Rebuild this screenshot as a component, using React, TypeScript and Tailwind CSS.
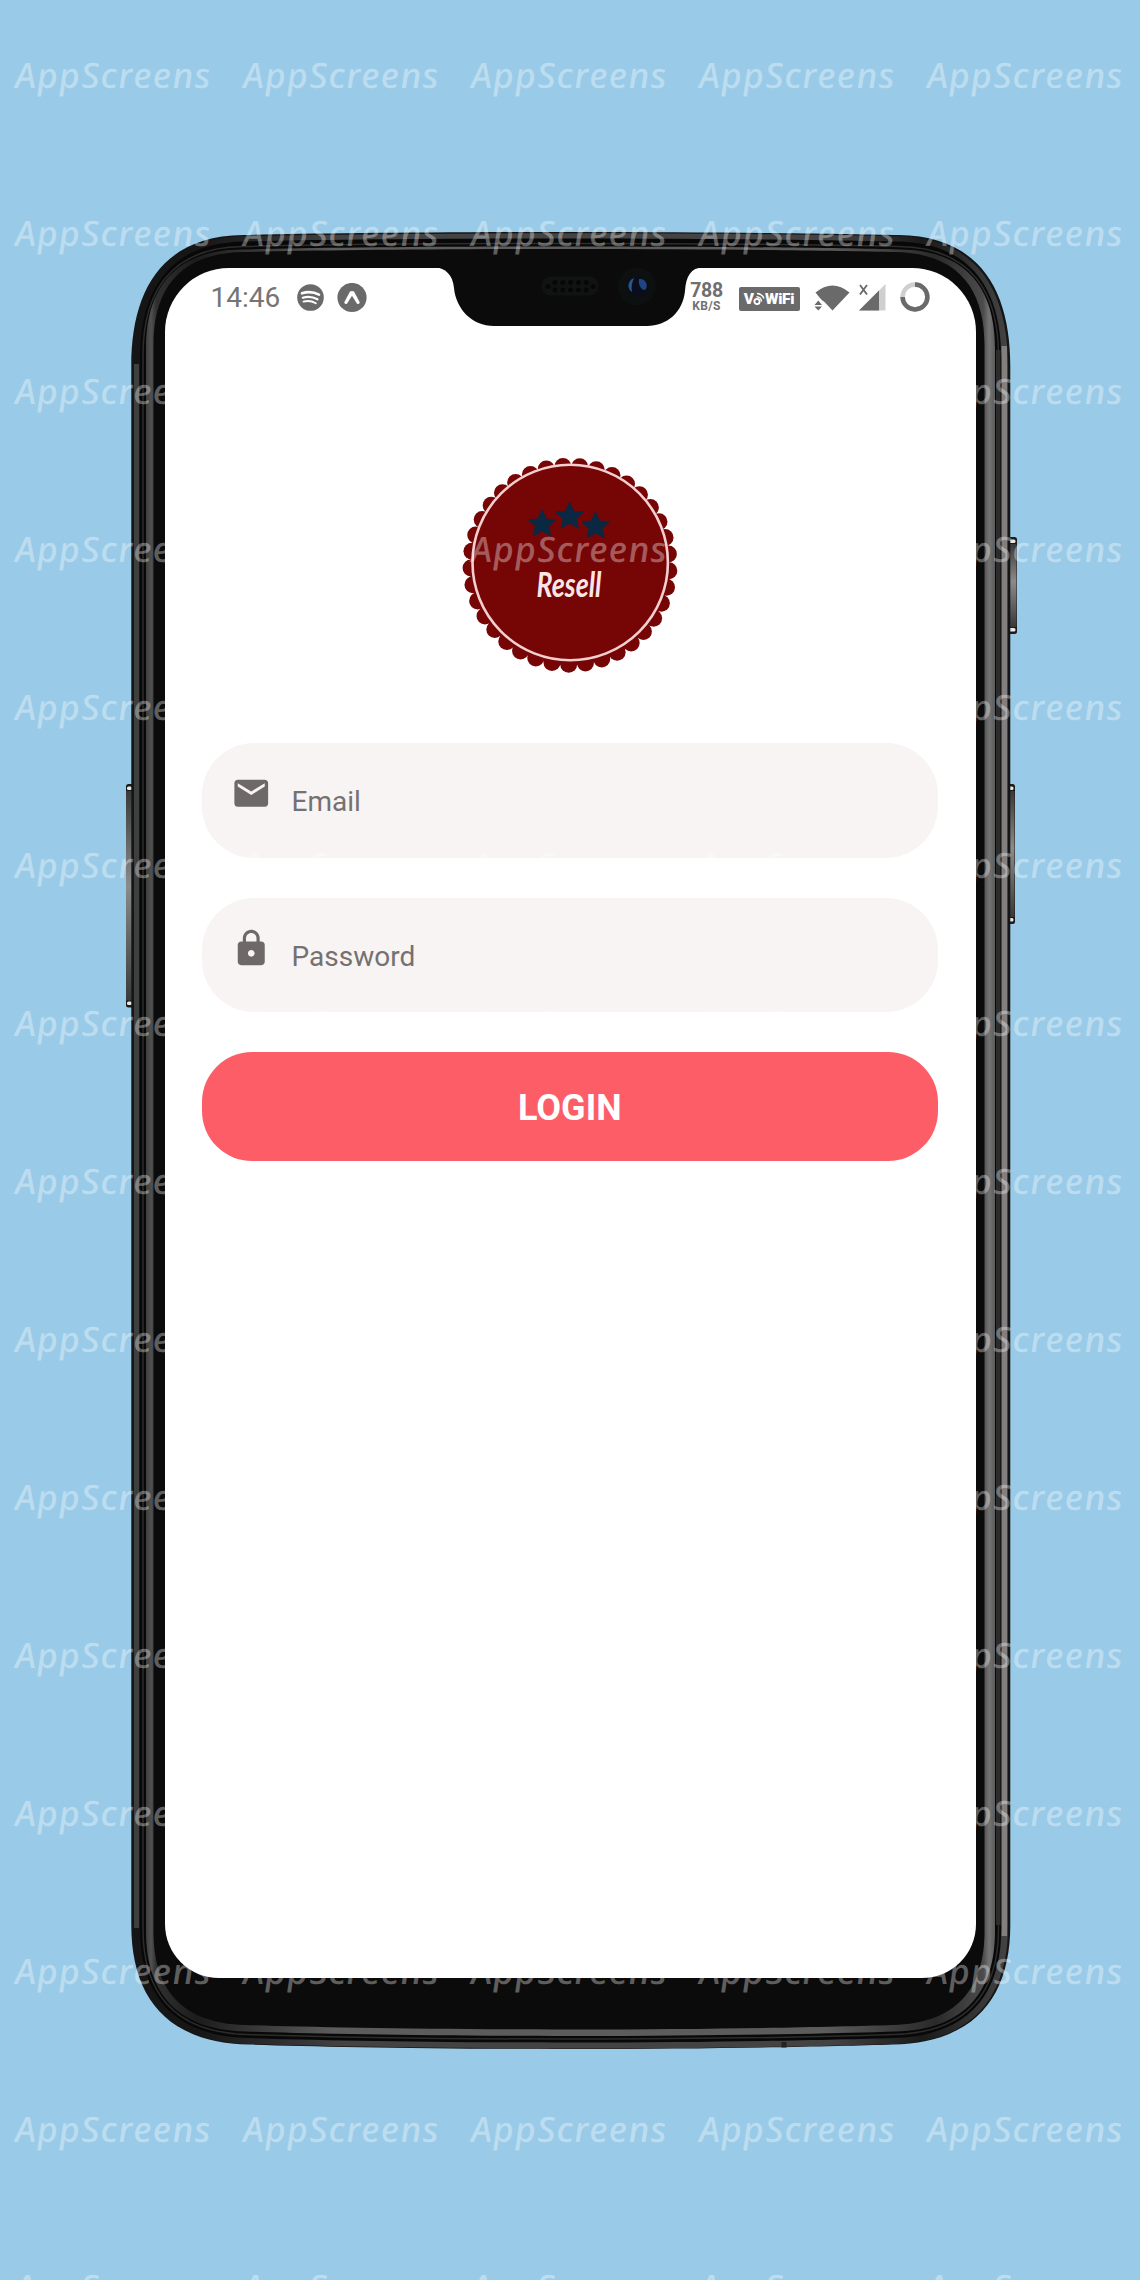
import React from "react";

type Box = { l: number; t: number; r: number; b: number };

// Outline of the handset: flat sides, soft corners and gently bowed top and bottom edges.
function shell({ l, t, r, b }: Box, tw: number, th: number, bw: number, bh: number) {
  const c = (l + r) / 2;
  return [
    `M${l} ${t + th}`,
    `C${l} ${t + th * 0.45} ${l + tw * 0.26} ${t + 4} ${l + tw} ${t + 3}`,
    `C${l + tw + 60} ${t + 1.5} ${l + tw + 180} ${t} ${c} ${t}`,
    `C${r - tw - 180} ${t} ${r - tw - 60} ${t + 1.5} ${r - tw} ${t + 3}`,
    `C${r - tw * 0.26} ${t + 4} ${r} ${t + th * 0.45} ${r} ${t + th}`,
    `L${r} ${b - bh}`,
    `C${r} ${b - bh * 0.44} ${r - bw * 0.28} ${b - 6} ${r - bw} ${b - 4.5}`,
    `C${r - bw - 60} ${b - 2.5} ${r - bw - 180} ${b} ${c} ${b}`,
    `C${l + bw + 180} ${b} ${l + bw + 60} ${b - 2.5} ${l + bw} ${b - 4.5}`,
    `C${l + bw * 0.28} ${b - 6} ${l} ${b - bh * 0.44} ${l} ${b - bh}`,
    "Z",
  ].join(" ");
}

function SideButton({ x, y, w, h, flip }: { x: number; y: number; w: number; h: number; flip?: boolean }) {
  const tip = flip ? x + 1.5 : x + 1;
  return (
    <g>
      <rect x={x} y={y} width={w} height={h} rx="2.5" fill="#1b1b1b" />
      <rect x={flip ? x + 1 : x} y={y + 7} width={w - 1.5} height={h - 14} fill="url(#button)" />
      <rect x={tip} y={y + 2.5} width={w - 3} height="3.5" rx="1.5" fill="#e8e8e8" />
      <rect x={tip} y={y + h - 6} width={w - 3} height="3.5" rx="1.5" fill="#e8e8e8" />
    </g>
  );
}

function Handset() {
  return (
    <svg className="absolute inset-0" width="1140" height="2280" viewBox="0 0 1140 2280" aria-hidden="true">
      <defs>
        <linearGradient id="rim" gradientUnits="userSpaceOnUse" x1="131" y1="0" x2="1010" y2="0">
          <stop offset="0" stopColor="#151515" />
          <stop offset="0.08" stopColor="#161616" />
          <stop offset="0.24" stopColor="#434343" />
          <stop offset="0.8" stopColor="#434343" />
          <stop offset="0.9" stopColor="#1a1a1a" />
          <stop offset="1" stopColor="#454444" />
        </linearGradient>
        <linearGradient id="bevel" gradientUnits="userSpaceOnUse" x1="146" y1="0" x2="995" y2="0">
          <stop offset="0" stopColor="#3d3e3d" />
          <stop offset="0.006" stopColor="#505250" />
          <stop offset="0.012" stopColor="#303030" />
          <stop offset="0.06" stopColor="#1c1c1c" />
          <stop offset="0.22" stopColor="#5c5c5c" />
          <stop offset="0.8" stopColor="#5c5c5c" />
          <stop offset="0.93" stopColor="#2a2a2a" />
          <stop offset="0.986" stopColor="#4b4b4b" />
          <stop offset="0.993" stopColor="#747474" />
          <stop offset="1" stopColor="#5c5c5c" />
        </linearGradient>
        <linearGradient id="button" x1="0" y1="0" x2="0" y2="1">
          <stop offset="0" stopColor="#3a3a3a" />
          <stop offset="0.45" stopColor="#8b8b8b" />
          <stop offset="1" stopColor="#3a3a3a" />
        </linearGradient>
      </defs>

      <SideButton x={126} y={784} w={8} h={223.5} />
      <SideButton x={1007} y={537} w={10} h={97} flip />
      <SideButton x={1007} y={784} w={8} h={140} flip />

      <path d={shell({ l: 131.3, t: 232, r: 1010.3, b: 2049 }, 112, 134, 118, 124)} fill="#161616" />
      <path d={shell({ l: 133.5, t: 233.3, r: 1008, b: 2048.5 }, 111, 133, 117, 123)} fill="url(#rim)" />
      <rect x="134" y="364" width="5" height="1564" fill="#3e3f3f" />
      <rect x="1001.5" y="346" width="5.5" height="1590" fill="#837f7f" />
      <path d={shell({ l: 140, t: 238.5, r: 1001.3, b: 2042.5 }, 105, 120, 109, 114)} fill="#080808" />
      <path
        d={shell({ l: 143, t: 243.5, r: 998.5, b: 2039 }, 100, 112, 105, 110)}
        fill="none"
        stroke="#2c2c2c"
        strokeWidth="1.5"
      />
      <rect x="996" y="350" width="4.5" height="1575" fill="#2c2c2c" />
      <path d={shell({ l: 146, t: 246.5, r: 995, b: 2036 }, 95, 102, 100, 105)} fill="url(#bevel)" />
      <path d={shell({ l: 153.5, t: 249, r: 984.5, b: 2029.5 }, 90, 96, 92, 98)} fill="#0b0b0b" />
      <rect x="781.5" y="2042" width="5" height="5.5" fill="#222" />
    </svg>
  );
}

const grille = [0, 1, 2, 3, 4];

function Notch() {
  return (
    <svg className="absolute left-[270.5px] top-[-1.5px]" width="270" height="61" viewBox="0 0 270 61" aria-hidden="true">
      <path
        d="M0 0V1.500C10 1.500 18 9 19 22C21 43 37 60 59 60H212C232 60 248 46 250 25C251 10 256 1.500 268 1.500V0Z"
        fill="#0b0b0b"
      />
      <rect x="106.500" y="10.500" width="57" height="19" rx="9.500" fill="#111313" />
      {grille.map((i) => (
        <g key={i} fill="#070707">
          <circle cx={120 + i * 7.8} cy="16.500" r="2.500" />
          <circle cx={120 + i * 7.8} cy="24" r="2.500" />
        </g>
      ))}
      <circle cx="113" cy="20.500" r="2.500" fill="#070707" />
      <circle cx="158" cy="20.500" r="2.500" fill="#070707" />
      <circle cx="202" cy="20.500" r="19" fill="#0d1011" />
      <circle cx="203" cy="20.500" r="10" fill="#0a0e1c" />
      <path d="M199 12C192 15 192 23 197 26C196 21 197 16 199 12Z" fill="#28588f" />
      <path d="M204 13C211 12 214 20 210 24C206 24 203 19 204 13Z" fill="#1f4680" />
    </svg>
  );
}

function StatusBar() {
  return (
    <div className="flex h-[60px] items-center text-[#6f6f6f]">
      <span className="ml-[46px] mt-[1px] w-[86px] text-[28px] leading-[60px] text-[#757575]">14:46</span>
      <svg width="27" height="27" viewBox="0 0 27 27">
        <circle cx="13.500" cy="13.500" r="13.300" fill="#6a6a6a" />
        <g fill="none" stroke="#fff" strokeLinecap="round">
          <path d="M5 9.300C10.500 7.500 17 8 22 10.700" strokeWidth="2.600" />
          <path d="M5.800 13.700C10.500 12.300 16 12.800 20.500 15.300" strokeWidth="2.200" />
          <path d="M6.500 17.600C10.500 16.600 15 17 18.800 19.300" strokeWidth="1.900" />
        </g>
      </svg>
      <svg className="ml-[13px]" width="30" height="30" viewBox="0 0 30 30">
        <circle cx="15" cy="14.500" r="14.600" fill="#6a6a6a" />
        <path
          d="M13 8.500Q15 7.300 17 8.500C19 12 21 16 22.800 19.500Q21.500 22.300 19.700 20.200L15 12.800L10.300 20.200Q8.500 22.300 7.200 19.500C9 16 11 12 13 8.500Z"
          fill="#fff"
        />
      </svg>

      <div className="-mt-[2px] ml-[323px] flex w-[34px] flex-col items-center font-bold">
        <span className="text-[19.500px] leading-[18px] tracking-[-0.300px]">788</span>
        <span className="text-[12px] leading-[12px] tracking-[0.300px]">KB/S</span>
      </div>
      <div className="ml-[15px] mt-[2px] flex h-[24px] w-[61px] items-center justify-center rounded-[2px] bg-[#6a6a6a] text-[15.500px] font-black leading-[24px] text-white">
        <span>V</span>
        <svg className="-ml-[1px]" width="12" height="14" viewBox="0 0 12 14" fill="none" stroke="#fff">
          <circle cx="4" cy="9.500" r="2.600" strokeWidth="1.900" />
          <path d="M3.500 4.800A5 5 0 0 1 8.600 9.500M4 1.500A8 8 0 0 1 11 6.500" strokeWidth="1.400" />
        </svg>
        <span className="tracking-[-0.300px]">WiFi</span>
      </div>
      <svg className="ml-[14px] mt-[1px]" width="36" height="26" viewBox="0 0 36 26" fill="#6a6a6a">
        <path d="M1.500 7.500Q18.500 -6.500 35.500 7.500L18.500 25.500L10.500 17L8 15.300L5.500 12.500Z" />
        <path d="M0.500 20L4.300 15.500L8 20ZM0.500 21.500H8L4.300 25.500Z" />
      </svg>
      <svg className="ml-[9px]" width="27" height="27" viewBox="0 0 27 27">
        <path d="M26.500 0V26.500H0Z" fill="#cfcfcf" />
        <path d="M20 6.500V26.500H0Z" fill="#6a6a6a" />
        <path d="M1 1L8 10.500M8 1L1 10.500" stroke="#6a6a6a" strokeWidth="1.900" />
      </svg>
      <svg className="-mt-[1px] ml-[14px]" width="30" height="30" viewBox="0 0 30 30" fill="none" strokeWidth="4.500">
        <circle cx="15" cy="15" r="12.400" stroke="#cfcfcf" />
        <path d="M15 2.600A12.400 12.400 0 1 1 2.600 15" stroke="#6a6a6a" />
      </svg>
    </div>
  );
}

const SCALLOPS = 37;
const STAR = "M0 -14.300L4.200 -5L14 -4.400L6.600 2.400L8.800 12L0 7L-8.800 12L-6.600 2.400L-14 -4.400L-4.200 -5Z";

function Logo() {
  return (
    <svg className="mx-auto block" width="220" height="220" viewBox="0 0 220 220">
      <g fill="#760506">
        {Array.from({ length: SCALLOPS }, (_, i) => {
          const a = ((-4.1 + (i * 360) / SCALLOPS) * Math.PI) / 180;
          return <circle key={i} cx={110 + 99 * Math.sin(a)} cy={110.200 - 99 * Math.cos(a)} r="8.500" />;
        })}
        <circle cx="110" cy="110" r="100" />
      </g>
      <circle cx="110.200" cy="107.500" r="97.700" fill="none" stroke="#f3cfcf" strokeWidth="2.600" />
      <g fill="#0a2842" stroke="#0a2842" strokeWidth="0.800" strokeLinejoin="round">
        <path d={STAR} transform="translate(82 69)" />
        <path d={STAR} transform="translate(109.700 61.300)" />
        <path d={STAR} transform="translate(135.500 71)" />
      </g>
      <text
        x="76.500"
        y="142"
        fill="#fae6e6"
        fontFamily="Lato, sans-serif"
        fontStyle="italic"
        fontWeight="700"
        fontSize="34"
        textLength="65"
        lengthAdjust="spacingAndGlyphs"
      >
        Resell
      </text>
    </svg>
  );
}

function Field({ label, path }: { label: string; path: string }) {
  return (
    <div className="flex h-[114.500px] items-start rounded-[52px] bg-[#f7f4f3] pl-[29.500px]">
      <svg className="mt-[30px] shrink-0" width="40.500" height="40.500" viewBox="0 0 24 24" fill="#6e6968">
        <path d={path} />
      </svg>
      <span className="ml-[20px] mt-[42px] text-[28px] leading-[33px] text-[#757170]">{label}</span>
    </div>
  );
}

const MAIL =
  "M20 4H4c-1.100 0-1.990.9-1.990 2L2 18c0 1.100.9 2 2 2h16c1.100 0 2-.9 2-2V6c0-1.100-.9-2-2-2zm0 4l-8 5-8-5V6l8 5 8-5v2z";
const LOCK =
  "M18 8h-1V6c0-2.760-2.240-5-5-5S7 3.240 7 6v2H6c-1.100 0-2 .9-2 2v10c0 1.100.9 2 2 2h12c1.100 0 2-.9 2-2V10c0-1.100-.9-2-2-2zm-6 9c-1.100 0-2-.9-2-2s.9-2 2-2 2 .9 2 2-.9 2-2 2zm3.100-9H8.900V6c0-1.710 1.390-3.100 3.100-3.100s3.100 1.390 3.100 3.100v2z";

function Watermark() {
  return (
    <div className="pointer-events-none absolute inset-0 grid grid-cols-5 auto-rows-[158px] overflow-hidden font-['Noto_Sans'] text-[35px] font-medium italic leading-[40px] tracking-[0.900px] text-white/35">
      {Array.from({ length: 75 }, (_, i) => (
        <div key={i} className="pl-[15.500px] pt-[55px]">
          <span className="inline-block origin-bottom-left scale-x-[1.035] skew-x-[4deg]">AppScreens</span>
        </div>
      ))}
    </div>
  );
}

export default function App() {
  return (
    <div className="relative flex h-[2280px] w-[1140px] items-start overflow-hidden bg-[#99cae7] font-['Roboto',sans-serif]">
      <Handset />
      <main className="relative ml-[164.500px] mt-[267.500px] h-[1710px] w-[811.500px] rounded-t-[64px] rounded-b-[54px] bg-white">
        <StatusBar />
        <Notch />
        <div className="mt-[127.500px] pl-[37px] pr-[38px]">
          <Logo />
          <form className="mt-[68px] flex flex-col gap-[40px]">
            <Field label="Email" path={MAIL} />
            <Field label="Password" path={LOCK} />
            <button
              type="button"
              className="h-[108.500px] rounded-[50px] bg-[#fd5d67] pt-[3px] text-[36px] font-bold leading-[42px] text-white"
            >
              LOGIN
            </button>
          </form>
        </div>
      </main>
      <Watermark />
    </div>
  );
}
